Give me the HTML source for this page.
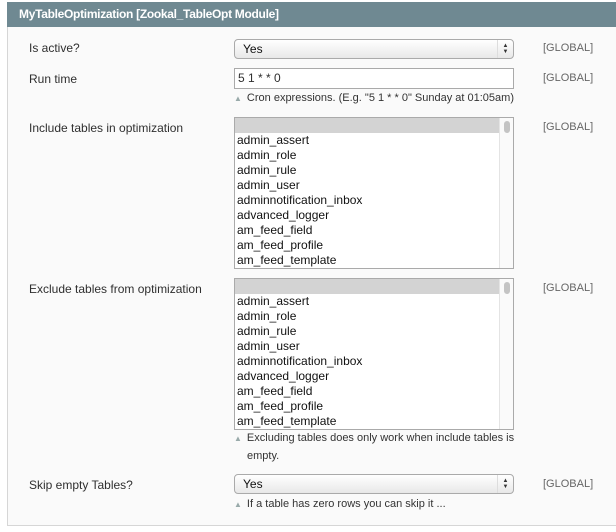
<!DOCTYPE html>
<html><head><style>
body{margin:0;width:616px;height:532px;background:#fff;font-family:"Liberation Sans",Arial,sans-serif;font-size:12px;color:#2f2f2f;position:relative;overflow:hidden}
.hd{position:absolute;left:7px;top:2px;width:609px;height:25px;background:#6f8992;color:#fff;font-weight:bold;font-size:12px;line-height:24px;padding-left:12px;box-sizing:border-box;letter-spacing:-0.3px}
.pn{position:absolute;left:7px;top:27px;width:609px;height:499px;background:#fafafa;border-left:1px solid #d6d6d6;border-bottom:1px solid #d6d6d6;box-sizing:border-box}
.l{position:absolute;left:29px;font-size:12px}
.g{position:absolute;left:543px;color:#666;font-size:11px}
.sel{position:absolute;left:234px;width:280px;height:20px;border:1px solid #aaa;border-radius:4px;background:linear-gradient(#fff,#e8e8e8);box-sizing:border-box;font-size:12px;line-height:18px;padding-left:8px;color:#111}
.arr{position:absolute;right:0;top:0;width:16px;height:18px;border-left:1px solid #ddd;text-align:center;font-size:6px;line-height:6px;padding-top:3px;box-sizing:border-box;color:#333}
.inp{position:absolute;left:234px;top:68px;width:280px;height:21px;border:1px solid #aaa;background:#fff;box-sizing:border-box;padding-left:3px;line-height:19px}
.h{position:absolute;left:234px;font-size:11px;color:#333;line-height:18px}
.h b{font-weight:normal;color:#9aa;font-size:8px;margin-right:5px}
.lb{position:absolute;left:234px;width:280px;height:152px;border:1px solid #aaa;background:#fff;box-sizing:border-box;overflow:hidden}
.lb .f{height:15px;background:#d3d3d3}
.lb div.i{line-height:15px;padding-left:2px;font-size:12px;color:#111}
.lb:after{content:"";position:absolute;right:0;top:0;width:13px;height:100%;border-left:1px solid #e4e4e4;background:#fafafa}
.sb{position:absolute;right:3px;top:3px;width:6px;height:12px;border-radius:3px;background:#c4c4c4;z-index:2}
</style></head><body>
<div class="hd">MyTableOptimization [Zookal_TableOpt Module]</div>
<div class="pn"></div>
<div class="l" style="top:41px">Is active?</div>
<div class="sel" style="top:39px">Yes<span class="arr">▲<br>▼</span></div>
<div class="g" style="top:42px">[GLOBAL]</div>
<div class="l" style="top:72px">Run time</div>
<div class="inp">5 1 * * 0</div>
<div class="g" style="top:72px">[GLOBAL]</div>
<div class="h" style="top:89px"><b>▲</b>Cron expressions. (E.g. "5 1 * * 0" Sunday at 01:05am)</div>
<div class="l" style="top:121px">Include tables in optimization</div>
<div class="lb" style="top:117px"><div class="f"></div><div class="i">admin_assert</div><div class="i">admin_role</div><div class="i">admin_rule</div><div class="i">admin_user</div><div class="i">adminnotification_inbox</div><div class="i">advanced_logger</div><div class="i">am_feed_field</div><div class="i">am_feed_profile</div><div class="i">am_feed_template</div><div class="sb"></div></div>
<div class="g" style="top:121px">[GLOBAL]</div>
<div class="l" style="top:282px">Exclude tables from optimization</div>
<div class="lb" style="top:278px"><div class="f"></div><div class="i">admin_assert</div><div class="i">admin_role</div><div class="i">admin_rule</div><div class="i">admin_user</div><div class="i">adminnotification_inbox</div><div class="i">advanced_logger</div><div class="i">am_feed_field</div><div class="i">am_feed_profile</div><div class="i">am_feed_template</div><div class="sb"></div></div>
<div class="g" style="top:282px">[GLOBAL]</div>
<div class="h" style="top:429px"><b>▲</b>Excluding tables does only work when include tables is</div>
<div class="h" style="top:447px;left:247px">empty.</div>
<div class="l" style="top:478px">Skip empty Tables?</div>
<div class="sel" style="top:474px">Yes<span class="arr">▲<br>▼</span></div>
<div class="g" style="top:478px">[GLOBAL]</div>
<div class="h" style="top:495px"><b>▲</b>If a table has zero rows you can skip it ...</div>
</body></html>
